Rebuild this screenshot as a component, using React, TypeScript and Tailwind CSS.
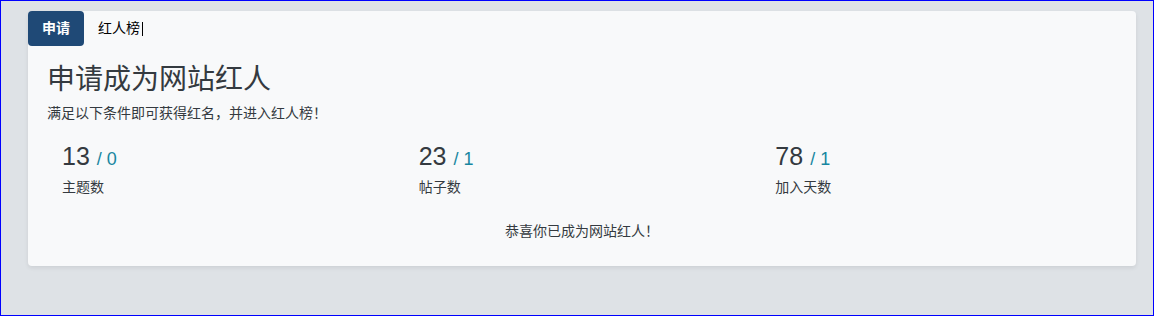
import React from 'react';

const stats = [
  { value: 13, need: 0, label: '主题数' },
  { value: 23, need: 1, label: '帖子数' },
  { value: 78, need: 1, label: '加入天数' },
];

function App() {
  return (
    <div
      className="h-[316px] w-full border border-[#0000ff] bg-[#dee2e6] text-[#343a40]"
      style={{ fontFamily: '"Liberation Sans", "Noto Sans CJK SC", sans-serif' }}
    >
      <div className="ml-[27px] mt-[10px] w-[1108px] rounded-[4px] bg-[#f8f9fa] shadow-[0_2px_4px_rgba(0,0,0,0.08)]">
        {/* tabs */}
        <div className="flex h-[35px] items-center">
          <div className="flex h-[35px] w-[56px] items-center justify-center rounded-[4px] bg-[#1f4976] text-[14px] font-bold text-white">
            申请
          </div>
          <div className="ml-[14px] flex items-center text-[14px] text-black">
            红人榜
            <span className="ml-[2px] inline-block h-[14px] w-px bg-black" />
          </div>
        </div>

        <div className="px-[19px] pb-[24px]">
          <h2 className="mt-[17px] text-[28px] leading-[1.2] font-normal">申请成为网站红人</h2>
          <p className="mt-[6px] text-[14px] leading-[21px]">满足以下条件即可获得红名，并进入红人榜！</p>

          <div className="mt-[18px] grid grid-cols-3">
            {stats.map((s) => (
              <div key={s.label} className="pl-[15px]">
                <div className="flex h-[29px] items-baseline text-[25px] leading-[29px]">
                  <span>{s.value}</span>
                  <span className="ml-[7px] text-[18px] text-[#1786a0]">/ {s.need}</span>
                </div>
                <div className="mt-[6px] text-[14px] leading-[21px]">{s.label}</div>
              </div>
            ))}
          </div>

          <p className="mt-[23px] text-center text-[14px] leading-[21px]">恭喜你已成为网站红人！</p>
        </div>
      </div>
    </div>
  );
}

export default App;
